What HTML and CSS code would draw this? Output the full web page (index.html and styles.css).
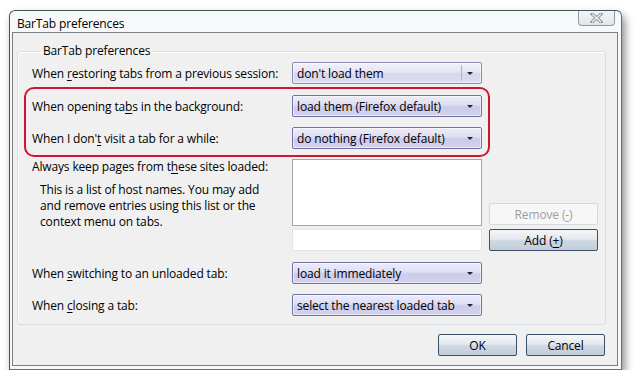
FILE: index.html
```html
<!DOCTYPE html>
<html lang="en">

<head>
    <meta charset="UTF-8">
    <title>BarTab preferences</title>
    <link rel="stylesheet" href="styles.css">
</head>

<body>
    <div class="window">
        <div class="titlebar">
            <span class="title">BarTab preferences</span>
            <span class="close">
                <svg width="13" height="10" viewBox="0 0 13 10">
                    <path d="M2 1 L11 9 M11 1 L2 9" stroke="#8d9296" stroke-width="3.2" stroke-linecap="square" fill="none" />
                    <path d="M2 1 L11 9 M11 1 L2 9" stroke="#f4f5f6" stroke-width="1.2" fill="none" />
                </svg>
            </span>
        </div>

        <div class="client">
            <fieldset class="group">
                <legend>BarTab preferences</legend>

                <div class="row">
                    <label>When <u>r</u>estoring tabs from a previous session:</label>
                    <div class="select split"><span>don't load them</span><i class="arrow"></i></div>
                </div>

                <!-- highlighted rows -->
                <div class="highlight">
                    <div class="row">
                        <label>When opening ta<u>b</u>s in the background:</label>
                        <div class="select"><span>load them (Firefox default)</span><i class="arrow"></i></div>
                    </div>
                    <div class="row">
                        <label>When I don'<u>t</u> visit a tab for a while:</label>
                        <div class="select"><span>do nothing (Firefox default)</span><i class="arrow"></i></div>
                    </div>
                </div>

                <div class="sites">
                    <div class="sites-text">
                        <div>Always keep pages from t<u>h</u>ese sites loaded:</div>
                        <p>This is a list of host names. You may add<br>and remove entries using this list or the<br>context menu on tabs.</p>
                    </div>
                    <div class="sites-fields">
                        <div class="listbox"></div>
                        <div class="textbox"></div>
                    </div>
                    <div class="sites-buttons">
                        <button class="btn" disabled>Remove (<u>-</u>)</button>
                        <button class="btn add">Add (<u>+</u>)</button>
                    </div>
                </div>

                <div class="row gap">
                    <label>When <u>s</u>witching to an unloaded tab:</label>
                    <div class="select"><span>load it immediately</span><i class="arrow"></i></div>
                </div>
                <div class="row gap-sm">
                    <label>When <u>c</u>losing a tab:</label>
                    <div class="select"><span>select the nearest loaded tab</span><i class="arrow"></i></div>
                </div>
            </fieldset>

            <div class="footer">
                <button class="btn dlg">OK</button>
                <button class="btn dlg">Cancel</button>
            </div>
        </div>
    </div>
</body>

</html>
```

FILE: styles.css
```css
* {
    box-sizing: border-box;
}

body {
    margin: 0;
    background-color: white;
    font-family: "Open Sans", "Noto Sans", sans-serif;
    font-size: 12px;
    letter-spacing: -0.15px;
    color: black;
}

u {
    text-decoration: underline;
    text-underline-offset: 2px;
}

.window {
    margin: 10px 0 0 9px;
    width: 613px;
    height: 360px;
    border: 1px solid #47545a;
    border-right-color: #3f7f86;
    border-bottom-color: #3f7f86;
    border-radius: 6px 6px 0 0;
    background-color: #f6f8fa;
    box-shadow: 3px 5px 9px rgba(0, 0, 0, 0.45);
    display: flex;
    flex-direction: column;
    padding: 0 3px 3px 2px;
}

.titlebar {
    height: 21px;
    display: flex;
    align-items: flex-start;
}

.title {
    margin: 5px 0 0 5px;
    line-height: 16px;
}

.close {
    margin-left: auto;
    margin-right: 3px;
    width: 37px;
    height: 15px;
    border: 1px solid #8f9aa2;
    border-top: none;
    border-radius: 0 0 4px 4px;
    background: linear-gradient(#f2f4f6, #e2e6ea);
    display: flex;
    align-items: center;
    justify-content: center;
}

/* client area */
.client {
    flex: 1;
    border: 1px solid #7b8187;
    background-color: #f0f0f0;
    display: flex;
    flex-direction: column;
}

.group {
    margin: 10px 11px 0 4px;
    padding: 3px 0 8px 14px;
    border: 1px solid #d5dfe5;
    border-radius: 3px;
    box-shadow: inset 1px 1px 0 white;
    min-width: 0;
}

.group legend {
    margin-left: 9px;
    padding: 0 2px;
    line-height: 16px;
}

.row {
    display: flex;
    align-items: center;
    height: 22px;
}

.row.gap {
    margin-top: 11px;
}

.row.gap-sm {
    margin-top: 10px;
}

.row label {
    width: 260px;
}

.select {
    width: 190px;
    height: 22px;
    border: 1px solid #7272a4;
    border-radius: 2px;
    background: linear-gradient(#ececf8, #dedef3 45%, #cbcbea 55%, #d4d4ef);
    box-shadow: inset 0 0 0 1px rgba(255, 255, 255, 0.5);
    display: flex;
    align-items: center;
    padding-left: 4px;
    position: relative;
}

.select span {
    flex: 1;
}

.select.split {
    border-color: #8c8cb0;
    background: linear-gradient(#f2f2fa, #e4e4f4 45%, #d6d6ec 55%, #dedef1);
}

.select.split::after {
    content: "";
    position: absolute;
    right: 19px;
    top: 2px;
    bottom: 2px;
    border-left: 1px solid #b4b4cc;
}

.arrow {
    width: 0;
    height: 0;
    margin-right: 8px;
    border-left: 3px solid transparent;
    border-right: 3px solid transparent;
    border-top: 3px solid #222;
}

/* red annotation around two rows */
.highlight {
    margin: 3px 0 0 -8px;
    width: 466px;
    padding: 6px;
    border: 2px solid #d0162c;
    border-radius: 10px;
    display: flex;
    flex-direction: column;
    gap: 10px;
}

.sites {
    margin-top: 2px;
    display: flex;
    align-items: flex-start;
}

.sites-text {
    width: 260px;
    line-height: 16px;
}

.sites-text p {
    margin: 7px 0 0 8px;
}

.sites-fields {
    width: 190px;
    display: flex;
    flex-direction: column;
    gap: 3px;
}

.listbox {
    height: 67px;
    border: 1px solid #a3a7ab;
    background-color: white;
}

.textbox {
    height: 22px;
    border: 1px solid #e2e5e8;
    background-color: white;
}

.sites-buttons {
    align-self: flex-end;
    margin-left: 7px;
    display: flex;
    flex-direction: column;
    gap: 4px;
}

.btn {
    font-family: inherit;
    font-size: 12px;
    letter-spacing: -0.15px;
    width: 109px;
    height: 22px;
    padding: 0;
    color: black;
    border: 1px solid #3d4f66;
    border-radius: 2px;
    background: linear-gradient(#f4f6f9, #e4e9ef 45%, #cdd6e1 55%, #c3cdd9);
}

.btn:disabled {
    color: #a0a0a0;
    border-color: #d6d9dc;
    background: #f7f7f7;
}

.footer {
    margin-top: auto;
    padding: 0 12px 9px 0;
    display: flex;
    justify-content: flex-end;
    gap: 9px;
}

.btn.dlg {
    width: 79px;
}
```
